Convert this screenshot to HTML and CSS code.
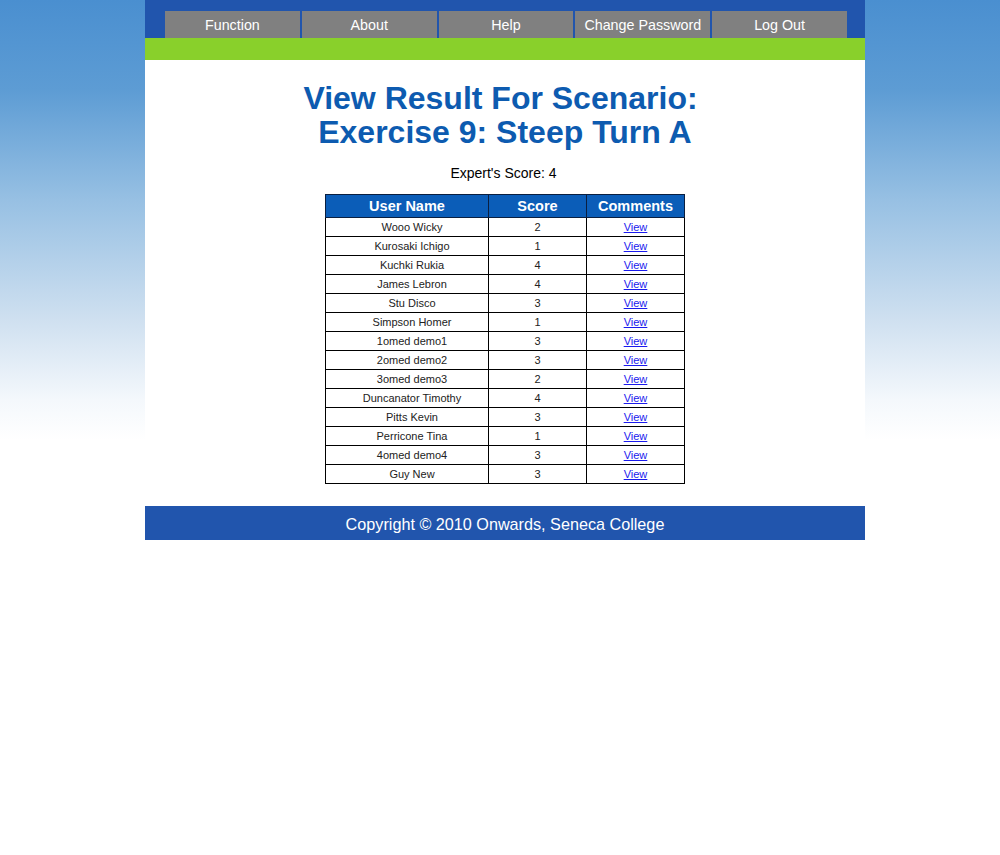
FILE: index.html
```html
<!DOCTYPE html>
<html>
<head>
<meta charset="utf-8">
<title>View Result</title>
<link rel="stylesheet" href="styles.css">
</head>
<body>
<div class="page">
  <div class="header">
    <ul class="menu">
      <li><a href="#">Function</a></li>
      <li><a href="#">About</a></li>
      <li><a href="#">Help</a></li>
      <li><a href="#">Change Password</a></li>
      <li><a href="#">Log Out</a></li>
    </ul>
  </div>
  <div class="greenbar"></div>
  <div class="content">
    <h1 class="title">View Result For Scenario:<br>&nbsp;Exercise 9: Steep Turn A</h1>
    <p class="expert">Expert's Score: 4</p>
    <table class="results">
      <thead>
        <tr><th class="c-name">User Name</th><th class="c-score">Score</th><th class="c-com">Comments</th></tr>
      </thead>
      <tbody>
        <tr><td>Wooo Wicky</td><td>2</td><td><a href="#">View</a></td></tr>
        <tr><td>Kurosaki Ichigo</td><td>1</td><td><a href="#">View</a></td></tr>
        <tr><td>Kuchki Rukia</td><td>4</td><td><a href="#">View</a></td></tr>
        <tr><td>James Lebron</td><td>4</td><td><a href="#">View</a></td></tr>
        <tr><td>Stu Disco</td><td>3</td><td><a href="#">View</a></td></tr>
        <tr><td>Simpson Homer</td><td>1</td><td><a href="#">View</a></td></tr>
        <tr><td>1omed demo1</td><td>3</td><td><a href="#">View</a></td></tr>
        <tr><td>2omed demo2</td><td>3</td><td><a href="#">View</a></td></tr>
        <tr><td>3omed demo3</td><td>2</td><td><a href="#">View</a></td></tr>
        <tr><td>Duncanator Timothy</td><td>4</td><td><a href="#">View</a></td></tr>
        <tr><td>Pitts Kevin</td><td>3</td><td><a href="#">View</a></td></tr>
        <tr><td>Perricone Tina</td><td>1</td><td><a href="#">View</a></td></tr>
        <tr><td>4omed demo4</td><td>3</td><td><a href="#">View</a></td></tr>
        <tr><td>Guy New</td><td>3</td><td><a href="#">View</a></td></tr>
      </tbody>
    </table>
  </div>
  <div class="footer">Copyright © 2010 Onwards, Seneca College</div>
</div>
</body>
</html>
```

FILE: styles.css
```css
html, body {
  margin: 0;
  padding: 0;
}
body {
  font-family: "Liberation Sans", Arial, sans-serif;
  background: #ffffff linear-gradient(to bottom, #4a8fd0 0px, #5d9cd4 90px, #97c0e3 200px, #cfe0f0 320px, #f4f8fc 400px, #ffffff 440px) no-repeat;
  background-size: 100% 440px;
  min-height: 855px;
  padding-left: 10px;
  box-sizing: border-box;
}
.page {
  width: 720px;
  margin: 0 auto;
}
.header {
  background: #2155ad;
  height: 38px;
  padding: 11px 18px 0 20px;
  box-sizing: border-box;
}
.menu {
  list-style: none;
  margin: 0;
  padding: 0;
  display: flex;
  gap: 2px;
  height: 27px;
}
.menu li {
  flex: 1;
  background: #808080;
  display: flex;
  align-items: center;
  justify-content: center;
}
.menu a {
  color: #ffffff;
  text-decoration: none;
  font-size: 14.3px;
}
.greenbar {
  background: #89d02b;
  height: 22px;
}
.content {
  background: #ffffff;
  padding: 21px 0 22px;
  display: flex;
  flex-direction: column;
  align-items: center;
}
.title {
  margin: 0;
  padding-right: 9px;
  color: #0d5bb0;
  font-size: 32px;
  line-height: 34px;
  font-weight: bold;
  text-align: center;
}
.expert {
  margin: 16px 0 13px;
  padding-right: 3px;
  font-size: 14px;
  line-height: 16px;
  color: #000000;
}
.results {
  border-collapse: collapse;
  border: 1px solid #000000;
  width: 360px;
}
.results th {
  background: #0b5db8;
  color: #ffffff;
  font-size: 14.5px;
  font-weight: bold;
  height: 22px;
  padding: 0;
  border: 1px solid #0a1f40;
}
.results .c-name { width: 162px; }
.results .c-score { width: 97px; }
.results td {
  font-size: 11px;
  color: #222222;
  text-align: center;
  height: 18px;
  padding: 0;
  border: 1px solid #000000;
}
.results td:first-child {
  padding-left: 10px;
}
.results td a {
  color: #1a1aee;
  text-decoration: underline;
}
.footer {
  background: #2155ad;
  color: #ffffff;
  height: 34px;
  line-height: 37px;
  text-align: center;
  font-size: 16.2px;
}
```
